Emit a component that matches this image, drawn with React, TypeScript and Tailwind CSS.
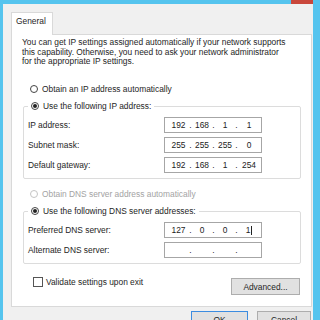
const font = { fontFamily: '"Liberation Sans", Arial, sans-serif' };

function Radio({ checked, disabled }: { checked?: boolean; disabled?: boolean }) {
  return (
    <span
      className={`w-[8px] h-[8px] rounded-full border bg-white flex items-center justify-center shrink-0 ${
        disabled ? 'border-[#c4c4c4]' : 'border-[#444]'
      }`}
    >
      {checked && <span className="w-[4px] h-[4px] rounded-full bg-[#222]" />}
    </span>
  );
}

function IpBox({ parts, cursor }: { parts: string[]; cursor?: boolean }) {
  return (
    <div className="w-[98px] h-[16px] border border-[#a6a6a6] bg-white flex items-center text-[8.4px] leading-[10px] text-[#222] pl-[3px]">
      <span className="w-[21px] text-center">{parts[0]}</span>
      <span className="w-[3px] text-center">.</span>
      <span className="w-[20px] text-center">{parts[1]}</span>
      <span className="w-[3px] text-center">.</span>
      <span className="w-[20px] text-center">{parts[2]}</span>
      <span className="w-[3px] text-center">.</span>
      <span className="w-[22px] text-center relative">
        {parts[3]}
        {cursor && <span className="inline-block w-[1px] h-[9px] bg-[#222] align-middle ml-[1px]" />}
      </span>
    </div>
  );
}

function Row({ label, parts, cursor }: { label: string; parts: string[]; cursor?: boolean }) {
  return (
    <div className="flex items-center h-[16px] ml-[4px]">
      <span className="w-[136px]">{label}</span>
      <IpBox parts={parts} cursor={cursor} />
    </div>
  );
}

export default function App() {
  return (
    <div className="w-[320px] h-[320px] overflow-hidden bg-[#55c4ee] text-[8.4px] leading-[10px] text-[#1e1e1e]" style={font}>
      {/* title bar strip */}
      <div className="h-[4px] flex justify-end pr-[7px]">
        <div className="w-[22px] h-[4px] bg-[#c9473b]" />
      </div>

      <div className="ml-[3px] w-[310px] h-[316px] bg-[#f0f0f0] pl-[8px] pt-[8px]">
        {/* tab */}
        <div className="w-[42px] h-[23px] bg-white border border-b-0 border-[#d9d9d9] -mb-[1px] relative z-10 pt-[3px] pl-[4px]">
          General
        </div>

        {/* tab panel */}
        <div className="w-[301px] h-[273px] bg-white border border-[#d9d9d9] flex flex-col">
          <p className="mt-[3px] ml-[10px] leading-[9.7px]">
            You can get IP settings assigned automatically if your network supports
            <br />
            this capability. Otherwise, you need to ask your network administrator
            <br />
            for the appropriate IP settings.
          </p>

          <label className="mt-[17px] ml-[18px] flex items-center gap-[4px] h-[10px]">
            <Radio />
            Obtain an IP address automatically
          </label>

          <fieldset className="mt-[7px] ml-[11px] w-[278px] border border-[#dcdcdc] rounded-[2px] pl-[4px] pb-[5px]">
            <legend className="px-[3px] flex items-center gap-[4px] h-[10px]">
              <Radio checked />
              Use the following IP address:
            </legend>
            <div className="flex flex-col gap-[4px] mt-[6px] -ml-[4px]">
              <Row label="IP address:" parts={['192', '168', '1', '1']} />
              <Row label="Subnet mask:" parts={['255', '255', '255', '0']} />
              <Row label="Default gateway:" parts={['192', '168', '1', '254']} />
            </div>
          </fieldset>

          <label className="mt-[10px] ml-[18px] flex items-center gap-[4px] h-[10px] text-[#a3a3a3]">
            <Radio disabled />
            Obtain DNS server address automatically
          </label>

          <fieldset className="mt-[7px] ml-[11px] w-[278px] border border-[#dcdcdc] rounded-[2px] pl-[4px] pb-[5px]">
            <legend className="px-[3px] flex items-center gap-[4px] h-[10px]">
              <Radio checked />
              Use the following DNS server addresses:
            </legend>
            <div className="flex flex-col gap-[4px] mt-[6px] -ml-[4px]">
              <Row label="Preferred DNS server:" parts={['127', '0', '0', '1']} cursor />
              <Row label="Alternate DNS server:" parts={['', '', '', '']} />
            </div>
          </fieldset>

          <div className="mt-[13px] ml-[21px] w-[267px] flex justify-between items-start">
            <label className="flex items-center gap-[3px]">
              <span className="w-[10px] h-[10px] border border-[#555] bg-white" />
              Validate settings upon exit
            </label>
            <button className="mt-[1px] w-[69px] h-[17px] bg-[#e1e1e1] border border-[#adadad] text-[#1e1e1e]">
              Advanced...
            </button>
          </div>
        </div>

        {/* dialog buttons */}
        <div className="flex mt-[4px] ml-[180px]">
          <button className="w-[57px] h-[17px] bg-[#e1e1e1] border border-[#3c8ce0]">OK</button>
          <button className="ml-[9px] w-[54px] h-[17px] bg-[#e1e1e1] border border-[#adadad]">Cancel</button>
        </div>
      </div>
    </div>
  );
}
